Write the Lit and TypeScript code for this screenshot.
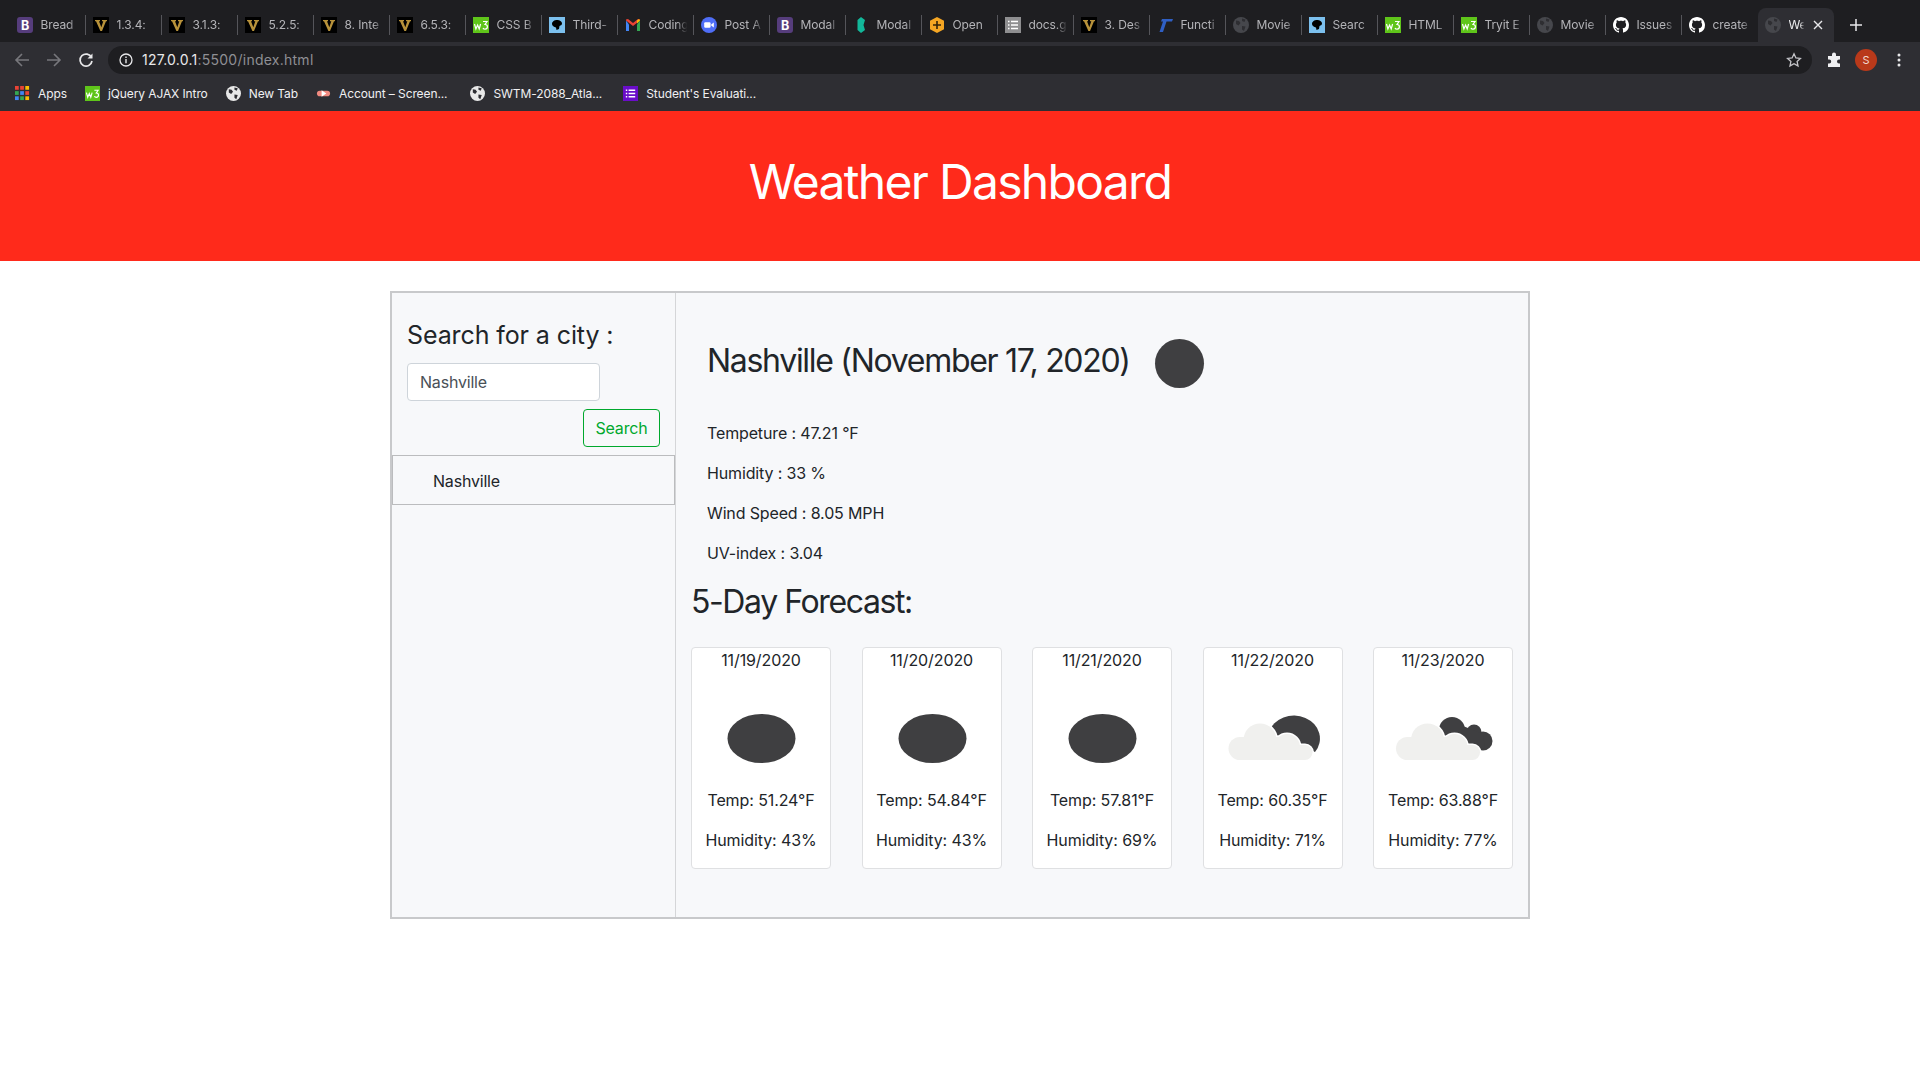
import { LitElement, html, css, svg } from 'lit';
import { customElement } from 'lit/decorators.js';

const GH = 'M8 0C3.58 0 0 3.58 0 8c0 3.54 2.29 6.53 5.47 7.59.4.07.55-.17.55-.38 0-.19-.01-.82-.01-1.49-2.01.37-2.53-.49-2.69-.94-.09-.23-.48-.94-.82-1.13-.28-.15-.68-.52-.01-.53.63-.01 1.08.58 1.23.82.72 1.21 1.87.87 2.33.66.07-.52.28-.87.51-1.07-1.78-.2-3.64-.89-3.64-3.95 0-.87.31-1.59.82-2.15-.08-.2-.36-1.02.08-2.12 0 0 .67-.21 2.2.82.64-.18 1.32-.27 2-.27.68 0 1.36.09 2 .27 1.53-1.04 2.2-.82 2.2-.82.44 1.1.16 1.92.08 2.12.51.56.82 1.27.82 2.15 0 3.07-1.87 3.75-3.65 3.95.29.25.54.73.54 1.48 0 1.07-.01 1.93-.01 2.2 0 .21.15.46.55.38A8.013 8.013 0 0016 8c0-4.42-3.58-8-8-8z';

const favicon = (kind: string) => {
  const body: Record<string, unknown> = {
    boot: svg`<rect width="16" height="16" rx="3" fill="#563d7c"/><text x="8" y="12.5" class="ico-txt" font-size="12.5" font-weight="700" fill="#fff">B</text>`,
    vu: svg`<rect width="16" height="16" fill="#000"/><path d="M2 3h5v1.2H6l2.3 6 2-6H9V3h5v1.2h-1L9 14H7.4L3 4.2H2z" fill="#b8923a"/>`,
    w3: svg`<rect width="16" height="16" fill="#5fc51a"/><path d="M1.5 7l1.4 5 1.7-4 1.6 4 1.4-5M10 4.5h4l-2 3c1.6 0 2.4 1 2.4 2.2 0 1.4-1 2.4-2.3 2.4-.9 0-1.7-.4-2.1-1.2" fill="none" stroke="#fff" stroke-width="1.2"/>`,
    third: svg`<rect width="16" height="16" fill="#7cc0ee"/><path d="M3 7c0-2.500 2.500-4 5-4s5 1.500 5 3.500c0 1.500-1.500 2-2.500 2.500l-.5 3-2.500 1-.5-2.500C5 10 3 9 3 7z" fill="#000"/>`,
    gmail: svg`<path d="M1 3.500V14h3V7.500z" fill="#4285f4"/><path d="M12 7.500V14h3V3.500z" fill="#34a853"/><path d="M1 3.500l7 5.500 7-5.500v-1l-2-.5-5 4-5-4-2 .5z" fill="#ea4335"/><path d="M12 3.500l2-1.500 1 1.500-3 3z" fill="#fbbc04"/>`,
    zoom: svg`<circle cx="8" cy="8" r="8" fill="#4f6ef7"/><rect x="3.200" y="5.300" width="6.400" height="5.400" rx="1.200" fill="#fff"/><path d="M10.200 7.500l2.600-2v5l-2.600-2z" fill="#fff"/>`,
    teal: svg`<path d="M8 0l4 3-1.500 5 1.500 5-4 3-3.500-3V3z" fill="#12b89a"/>`,
    open: svg`<path d="M8 0l7 3.800v8.400L8 16l-7-3.800V3.800z" fill="#f5a623"/><path d="M8 4v8M4 8h8" stroke="#33240a" stroke-width="1.600"/>`,
    docs: svg`<rect width="16" height="16" fill="#8e8e90"/><path d="M3 4.500h1.500M6 4.500h7M3 8h1.500M6 8h7M3 11.500h1.500M6 11.500h7" stroke="#fff" stroke-width="1.500"/>`,
    func: svg`<path d="M5 2h11l-1 2.500H9.500L6 15H2.500L6 4.500H4z" fill="#2f5fc4"/>`,
    globe: svg`<circle cx="8" cy="8" r="8" fill="#46474c"/><path d="M3 3.500l3 .5 1.500 2-2 2.500L3 7zM9 9l3.500.5L11 14 9 12.500zM9 1.500l3.500 1-1 2.500L9 4z" fill="#2e2e32"/>`,
    gh: svg`<path d="${GH}" fill="#fff"/>`,
    web: svg`<circle cx="8" cy="8" r="8" fill="#e8e8e8"/><path d="M3 3.500l3 .5 1.500 2-2 2.500L3 7zM9 9l3.500.5L11 14 9 12.500zM9 1.500l3.500 1-1 2.500L9 4z" fill="#2e2e33"/>`,
    apps: svg`<g>
      <rect x="0" y="0" width="4" height="4" fill="#ea4335"/><rect x="5.500" y="0" width="4" height="4" fill="#ea4335"/><rect x="11" y="0" width="4" height="4" fill="#fbbc04"/>
      <rect x="0" y="5.500" width="4" height="4" fill="#34a853"/><rect x="5.500" y="5.500" width="4" height="4" fill="#4285f4"/><rect x="11" y="5.500" width="4" height="4" fill="#ea4335"/>
      <rect x="0" y="11" width="4" height="4" fill="#4285f4"/><rect x="5.500" y="11" width="4" height="4" fill="#34a853"/><rect x="11" y="11" width="4" height="4" fill="#fbbc04"/></g>`,
    acct: svg`<rect x="1" y="5" width="14" height="6" rx="3" fill="#f08a80"/><path d="M6 4.500l5 3.500-5 3.500z" fill="#fff"/>`,
    purple: svg`<rect width="16" height="16" fill="#6a0dc9"/><path d="M3 4.500h1.500M6 4.500h7M3 8h1.500M6 8h7M3 11.500h1.500M6 11.500h7" stroke="#fff" stroke-width="1.500"/>`,
  };
  return html`<svg class="fav" viewBox="0 0 16 16">${body[kind]}</svg>`;
};

const TABS: [string, string][] = [
  ['boot', 'Bread'], ['vu', '1.3.4:'], ['vu', '3.1.3:'], ['vu', '5.2.5:'], ['vu', '8. Inte'], ['vu', '6.5.3:'],
  ['w3', 'CSS B'], ['third', 'Third-'], ['gmail', 'Coding'], ['zoom', 'Post A'], ['boot', 'Modal'], ['teal', 'Modal'],
  ['open', 'Open'], ['docs', 'docs.g'], ['vu', '3. Des'], ['func', 'Functi'], ['globe', 'Movie'], ['third', 'Searc'],
  ['w3', 'HTML'], ['w3', 'Tryit E'], ['globe', 'Movie'], ['gh', 'Issues'], ['gh', 'create'],
];

const BOOKMARKS: [string, string][] = [
  ['apps', 'Apps'], ['w3', 'jQuery AJAX Intro'], ['web', 'New Tab'], ['acct', 'Account – Screen...'],
  ['web', 'SWTM-2088_Atla...'], ['purple', "Student's Evaluati..."],
];

@customElement('browser-chrome')
export class BrowserChrome extends LitElement {
  static styles = css`
    :host {
      display: block;
      font-family: 'Inter', 'Liberation Sans', sans-serif;
      color: #e8e8ea;
    }

    .strip {
      height: 42px;
      box-sizing: border-box;
      padding: 8px 0 0 9.500px;
      background: #1e1e21;
      display: flex;
    }

    .tab {
      width: 76px;
      height: 34px;
      box-sizing: border-box;
      display: flex;
      align-items: center;
      gap: 8px;
      padding: 0 5px 0 7px;
      position: relative;
      font-size: 12px;
      letter-spacing: -0.1px;
      color: #b4b4b8;
    }

    .tab::after {
      content: '';
      position: absolute;
      right: 0;
      top: 7px;
      height: 20px;
      width: 1px;
      background: #55555a;
    }

    .tab.last::after {
      display: none;
    }

    .tab.active {
      background: #2e2e33;
      border-radius: 8px 8px 0 0;
      color: #ececee;
      padding-right: 11px;
    }

    .tab.active::after {
      display: none;
    }

    .name {
      flex: 1;
      overflow: hidden;
      white-space: nowrap;
      -webkit-mask-image: linear-gradient(to right, #000 70%, transparent 96%);
      mask-image: linear-gradient(to right, #000 70%, transparent 96%);
    }

    .fav {
      width: 16px;
      height: 16px;
      flex: none;
    }

    .ico-txt {
      text-anchor: middle;
      font-family: 'Inter', sans-serif;
    }

    .close {
      width: 10px;
      height: 10px;
      flex: none;
    }

    .plus {
      width: 14px;
      height: 14px;
      margin: 10px 0 0 15px;
      flex: none;
    }

    .toolbar {
      height: 32px;
      box-sizing: border-box;
      background: #2e2e33;
      display: flex;
      align-items: flex-start;
      padding-top: 4px;
    }

    .navs {
      width: 108px;
      flex: none;
      height: 28px;
      display: flex;
      align-items: center;
      padding-left: 14px;
      gap: 16px;
      box-sizing: border-box;
    }

    .nav {
      width: 16px;
      height: 16px;
      flex: none;
    }

    .url {
      width: 1704px;
      height: 28px;
      flex: none;
      box-sizing: border-box;
      border-radius: 14px;
      background: #1e1e21;
      display: flex;
      align-items: center;
      padding: 0 10px 0 11px;
      font-size: 14px;
      letter-spacing: 0.25px;
    }

    .url .info {
      width: 14px;
      height: 14px;
      margin-right: 9px;
      flex: none;
    }

    .url .dim {
      color: #8f8f94;
    }

    .url .star {
      width: 16px;
      height: 16px;
      margin-left: auto;
    }

    .ext {
      display: flex;
      align-items: center;
      height: 28px;
      padding-left: 14px;
    }

    .puzzle {
      width: 16px;
      height: 16px;
    }

    .avatar {
      width: 22px;
      height: 22px;
      border-radius: 50%;
      background: #b9391a;
      margin-left: 13px;
      display: flex;
      align-items: center;
      justify-content: center;
      font-size: 11px;
      color: #f2d8d0;
    }

    .dots {
      width: 4px;
      height: 14px;
      margin-left: 20px;
    }

    .bookmarks {
      height: 37px;
      box-sizing: border-box;
      background: #2e2e33;
      display: flex;
      align-items: center;
      padding: 2px 0 0 15px;
      gap: 18px;
      font-size: 12px;
      letter-spacing: -0.1px;
      color: #f0f0f2;
    }

    .mark {
      display: flex;
      align-items: center;
      gap: 8px;
    }

    .mark:nth-child(5) {
      margin-left: 5px;
    }

    .mark:nth-child(6) {
      margin-left: 3px;
    }

    .mark .fav {
      width: 15px;
      height: 15px;
    }
  `;

  render() {
    return html`
      <div class="strip">
        ${TABS.map(
          ([k, t], i) => html`<div class="tab ${i === TABS.length - 1 ? 'last' : ''}">${favicon(k)}<span class="name">${t}</span></div>`
        )}
        <div class="tab active">
          ${favicon('globe')}<span class="name">We</span>
          <svg class="close" viewBox="0 0 10 10"><path d="M1 1l8 8M9 1l-8 8" stroke="#e8e8ea" stroke-width="1.400"/></svg>
        </div>
        <svg class="plus" viewBox="0 0 14 14"><path d="M7 1v12M1 7h12" stroke="#e8e8ea" stroke-width="1.500"/></svg>
      </div>
      <div class="toolbar">
        <div class="navs">
          <svg class="nav" viewBox="0 0 16 16"><path d="M15 8H2M8 2L2 8l6 6" fill="none" stroke="#77777c" stroke-width="1.600"/></svg>
          <svg class="nav" viewBox="0 0 16 16"><path d="M1 8h13M8 2l6 6-6 6" fill="none" stroke="#77777c" stroke-width="1.600"/></svg>
          <svg class="nav" viewBox="0 0 16 16"><path d="M13.500 5.500A6 6 0 1 0 14 9" fill="none" stroke="#e8e8ea" stroke-width="1.700"/><path d="M14.500 1.500v5h-5z" fill="#e8e8ea"/></svg>
        </div>
        <div class="url">
          <svg class="info" viewBox="0 0 14 14"><circle cx="7" cy="7" r="6" fill="none" stroke="#e8e8ea" stroke-width="1.300"/><path d="M7 6v4.200M7 3.600v1.300" stroke="#e8e8ea" stroke-width="1.400"/></svg>
          <span>127.0.0.1</span><span class="dim">:5500/index.html</span>
          <svg class="star" viewBox="0 0 16 16"><path d="M8 1.800l1.900 4.100 4.500.5-3.300 3 .9 4.500L8 11.700l-4 2.200.9-4.500-3.300-3 4.500-.5z" fill="none" stroke="#c4c4c8" stroke-width="1.300"/></svg>
        </div>
        <div class="ext">
          <svg class="puzzle" viewBox="0 0 16 16"><path d="M6 2.500a2 2 0 0 1 4 0V4h4v3.500h-1a2 2 0 0 0 0 4h1V15H2v-3.500h1.200a2 2 0 0 0 0-4H2V4h4z" fill="#f0f0f2"/></svg>
          <div class="avatar">S</div>
          <svg class="dots" viewBox="0 0 4 14"><circle cx="2" cy="2" r="1.500" fill="#e8e8ea"/><circle cx="2" cy="7" r="1.500" fill="#e8e8ea"/><circle cx="2" cy="12" r="1.500" fill="#e8e8ea"/></svg>
        </div>
      </div>
      <div class="bookmarks">
        ${BOOKMARKS.map(([k, t]) => html`<div class="mark">${favicon(k)}<span>${t}</span></div>`)}
      </div>
    `;
  }
}

type Day = { date: string; temp: string; hum: string; icon: 'oval' | 'broken' | 'scattered' };

const DAYS: Day[] = [
  { date: '11/19/2020', temp: '51.24', hum: '43', icon: 'oval' },
  { date: '11/20/2020', temp: '54.84', hum: '43', icon: 'oval' },
  { date: '11/21/2020', temp: '57.81', hum: '69', icon: 'oval' },
  { date: '11/22/2020', temp: '60.35', hum: '71', icon: 'broken' },
  { date: '11/23/2020', temp: '63.88', hum: '77', icon: 'scattered' },
];

// light cloud, white halo first so it bites into the dark shape behind
const cloudShapes = svg`
  <circle cx="37" cy="68" r="16.500"/>
  <rect x="5.500" y="65" width="60" height="23" rx="11.500"/>
  <circle cx="64" cy="75" r="13"/>
  <rect x="50" y="73" width="39.500" height="15" rx="7.500"/>`;

const cloud = (dx: number) => svg`
  <g transform="translate(${dx} 0)">
    <g fill="#f0f0ee" stroke="#fff" stroke-width="3">${cloudShapes}</g>
    <g fill="#f0f0ee">${cloudShapes}</g>
  </g>`;

const weatherIcon = (kind: Day['icon']) => {
  if (kind === 'oval') {
    return html`<svg class="w-icon" viewBox="0 0 100 117"><ellipse cx="50.500" cy="66.500" rx="34" ry="24.500" fill="#3f3f41"/></svg>`;
  }
  if (kind === 'broken') {
    return html`<svg class="w-icon" viewBox="0 0 100 117">
      <path d="M46 60A26 23 0 1 1 92 80z" fill="#3f3f41"/>
      ${cloud(0)}
    </svg>`;
  }
  return html`<svg class="w-icon" viewBox="0 0 100 117">
    <g fill="#3f3f41">
      <circle cx="59" cy="58" r="13"/><circle cx="81" cy="60" r="7.500"/><circle cx="90" cy="69" r="9.500"/>
      <path d="M50 64l20-10 20 8 2 14-10 2z"/>
    </g>
    ${cloud(-2.500)}
  </svg>`;
};

@customElement('app-root')
export class AppRoot extends LitElement {
  static styles = css`
    :host {
      display: block;
      min-height: 1080px;
      background: #fff;
      font-family: 'Inter', 'Liberation Sans', sans-serif;
      color: #212529;
      font-size: 16px;
      line-height: 24px;
    }

    .hero {
      height: 150px;
      box-sizing: border-box;
      padding-bottom: 9px;
      background: #ff2a1b;
      color: #fff;
      display: flex;
      align-items: center;
      justify-content: center;
    }

    .hero h1 {
      margin: 0;
      font-size: 48px;
      font-weight: 400;
      line-height: 58px;
      letter-spacing: -1.7px;
    }

    .panel {
      width: 1140px;
      margin: 30px auto 0;
      box-sizing: border-box;
      border: 2px solid #c8c9cb;
      background: #f7f8fa;
      display: flex;
    }

    .side {
      width: 284px;
      flex: none;
      box-sizing: border-box;
      border-right: 1px solid #d5d6d8;
      padding-top: 27px;
    }

    .side h4 {
      margin: 0 0 12px 15px;
      font-size: 25px;
      font-weight: 400;
      line-height: 31px;
      letter-spacing: -0.1px;
    }

    .side input {
      display: block;
      margin-left: 15px;
      width: 193px;
      height: 38px;
      box-sizing: border-box;
      border: 1px solid #ced4da;
      border-radius: 4px;
      background: #fff;
      padding: 0 12px;
      font: 16px 'Inter', sans-serif;
      letter-spacing: -0.2px;
      color: #495057;
    }

    .actions {
      display: flex;
      justify-content: flex-end;
      padding-right: 15px;
      margin-top: 8px;
    }

    .actions button {
      height: 38px;
      width: 77px;
      box-sizing: border-box;
      border: 1px solid #00a82d;
      border-radius: 4px;
      background: transparent;
      color: #00a82d;
      font: 16px 'Inter', sans-serif;
      letter-spacing: -0.15px;
      padding: 0;
    }

    .city {
      margin-top: 8px;
      height: 50px;
      box-sizing: border-box;
      border: 1px solid #bbbcbe;
      padding: 1px 0 0 40px;
      display: flex;
      align-items: center;
      letter-spacing: -0.2px;
    }

    .main {
      flex: 1;
      padding: 46px 15px 48px;
      min-width: 0;
    }

    .now {
      display: flex;
      align-items: flex-start;
      padding-left: 16px;
      gap: 25px;
    }

    .now h2 {
      margin: 3px 0 0;
      font-size: 32px;
      font-weight: 400;
      line-height: 38px;
      letter-spacing: -1.3px;
    }

    .dot {
      width: 49px;
      height: 49px;
      border-radius: 50%;
      background: #3f3f41;
    }

    .stats {
      margin-top: 33px;
      padding-left: 16px;
      display: flex;
      flex-direction: column;
      gap: 16px;
      letter-spacing: -0.14px;
    }

    .forecast {
      margin: 18px 0 26px;
      font-size: 32px;
      font-weight: 400;
      line-height: 38px;
      letter-spacing: -1.4px;
    }

    .cards {
      display: flex;
      justify-content: space-between;
    }

    .card {
      width: 140px;
      height: 222px;
      box-sizing: border-box;
      border: 1px solid #dfe0e2;
      border-radius: 4px;
      background: #fff;
      display: flex;
      flex-direction: column;
      align-items: center;
      letter-spacing: -0.1px;
    }

    .w-icon {
      width: 100px;
      height: 117px;
      flex: none;
      margin-bottom: -1px;
    }

    .hum {
      margin-top: 16px;
    }
  `;

  render() {
    return html`
      <browser-chrome></browser-chrome>
      <header class="hero"><h1>Weather Dashboard</h1></header>
      <section class="panel">
        <aside class="side">
          <h4>Search for a city :</h4>
          <input type="text" .value=${'Nashville'} />
          <div class="actions"><button>Search</button></div>
          <div class="city">Nashville</div>
        </aside>
        <div class="main">
          <div class="now">
            <h2>Nashville (November 17, 2020)</h2>
            <div class="dot"></div>
          </div>
          <div class="stats">
            <div>Tempeture : 47.21 °F</div>
            <div>Humidity : 33 %</div>
            <div>Wind Speed : 8.05 MPH</div>
            <div>UV-index : 3.04</div>
          </div>
          <h2 class="forecast">5-Day Forecast:</h2>
          <div class="cards">
            ${DAYS.map(
              (d) => html`<div class="card">
                <div>${d.date}</div>
                ${weatherIcon(d.icon)}
                <div>Temp: ${d.temp}°F</div>
                <div class="hum">Humidity: ${d.hum}%</div>
              </div>`
            )}
          </div>
        </div>
      </section>
    `;
  }
}
